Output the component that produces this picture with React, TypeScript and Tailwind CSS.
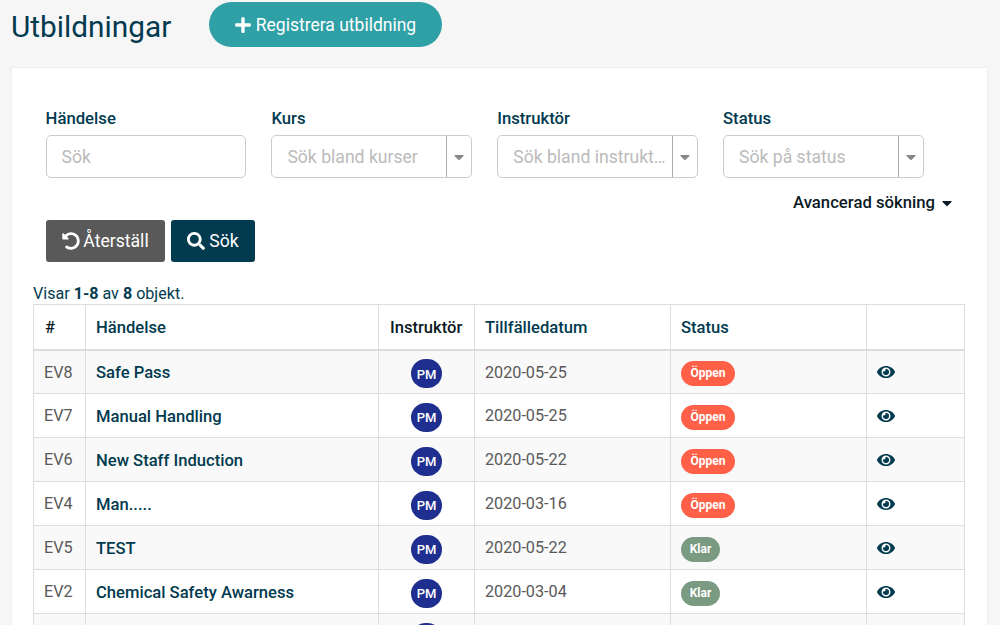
import { FaCaretDown, FaEye, FaPlus, FaSearch, FaUndoAlt } from 'react-icons/fa';

const ROWS = [
  { id: 'EV8', name: 'Safe Pass', date: '2020-05-25', status: 'Öppen' },
  { id: 'EV7', name: 'Manual Handling', date: '2020-05-25', status: 'Öppen' },
  { id: 'EV6', name: 'New Staff Induction', date: '2020-05-22', status: 'Öppen' },
  { id: 'EV4', name: 'Man.....', date: '2020-03-16', status: 'Öppen' },
  { id: 'EV5', name: 'TEST', date: '2020-05-22', status: 'Klar' },
  { id: 'EV2', name: 'Chemical Safety Awarness', date: '2020-03-04', status: 'Klar' },
  { id: 'EV1', name: '', date: '', status: '' },
];

function SelectBox({ placeholder }: { placeholder: string }) {
  return (
    <div className="flex h-[43px] rounded-[5px] border border-[#ccc] bg-white">
      <div className="min-w-0 flex-1 truncate pl-[15px] pr-1 text-[17.6px] leading-[43px] text-[#bbb]">{placeholder}</div>
      <div className="flex w-[25px] items-center justify-center border-l border-[#aaa] text-[#888]">
        <FaCaretDown className="h-[16px] w-[10px]" />
      </div>
    </div>
  );
}

function Filter({ label, children }: { label: string; children: React.ReactNode }) {
  return (
    <div>
      <div className="mb-[4px] h-[24px] text-[16.7px] font-medium leading-[24px] text-[#023a4f]">{label}</div>
      {children}
    </div>
  );
}

export default function App() {
  return (
    <div className="h-[625px] overflow-hidden bg-[#f6f6f6] font-['Roboto',sans-serif] text-[#023a4f]">
      {/* Header */}
      <div className="flex items-start pl-[11px] pt-[2px]">
        <h1 className="mt-[7px] w-[198px] text-[29.8px] font-normal leading-[36px]">Utbildningar</h1>
        <button className="flex h-[45px] w-[233px] items-center justify-center gap-[5px] rounded-full bg-[#2fa0a6] text-[17.5px] text-white">
          <FaPlus className="h-[18px] w-[16px]" />
          <span className="mt-[2px]">Registrera utbildning</span>
        </button>
      </div>

      {/* Panel */}
      <div className="ml-[11px] mt-[20px] w-[977px] border border-[#eee] bg-white pl-[21px] pt-[39px]">
        <div className="ml-[12.6px] grid w-[878px] grid-cols-4 gap-x-[25.2px]">
          <Filter label="Händelse">
            <div className="h-[43px] rounded-[5px] border border-[#ccc] pl-[15px] text-[17.6px] leading-[43px] text-[#bbb]">Sök</div>
          </Filter>
          <Filter label="Kurs">
            <SelectBox placeholder="Sök bland kurser" />
          </Filter>
          <Filter label="Instruktör">
            <SelectBox placeholder="Sök bland instruktörer" />
          </Filter>
          <Filter label="Status">
            <SelectBox placeholder="Sök på status" />
          </Filter>
        </div>

        <div className="mr-[35px] mt-[13px] flex h-[24px] items-center justify-end gap-[7px] text-[16.7px] font-medium text-[#0b1a24]">
          Avancerad sökning
          <FaCaretDown className="h-[16px] w-[10px]" />
        </div>

        <div className="ml-[13px] mt-[5px] flex gap-[6px] text-[17.6px] text-white">
          <button className="flex h-[42px] w-[119px] items-center justify-center gap-[3px] rounded-[3px] bg-[#595959]">
            <FaUndoAlt className="h-[18px] w-[18px]" />
            Återställ
          </button>
          <button className="flex h-[42px] w-[84px] items-center justify-center gap-[4px] rounded-[3px] bg-[#023a4f]">
            <FaSearch className="h-[18px] w-[18px]" />
            Sök
          </button>
        </div>

        <div className="mt-[22px] h-[20px] text-[16.1px] leading-[20px]">
          Visar <b className="font-bold">1-8</b> av <b className="font-bold">8</b> objekt.
        </div>

        {/* Table */}
        <table className="w-[931px] table-fixed border-collapse border border-[#ddd] text-[16.2px]">
          <colgroup>
            <col className="w-[52px]" />
            <col className="w-[293px]" />
            <col className="w-[96px]" />
            <col className="w-[196px]" />
            <col className="w-[196px]" />
            <col className="w-[98px]" />
          </colgroup>
          <thead>
            <tr className="h-[45px] border-b-2 border-[#ddd] text-left text-[16.6px]">
              <th className="border-r border-[#ddd] px-[11px] pt-[4px] font-medium text-[#0b1a24]">#</th>
              <th className="border-r border-[#ddd] px-[10px] pt-[4px] font-medium">Händelse</th>
              <th className="border-r border-[#ddd] pl-[11px] pt-[4px] font-medium text-[#0b1a24]">Instruktör</th>
              <th className="border-r border-[#ddd] px-[10px] pt-[4px] font-medium">Tillfälledatum</th>
              <th className="border-r border-[#ddd] px-[10px] pt-[4px] font-medium">Status</th>
              <th></th>
            </tr>
          </thead>
          <tbody>
            {ROWS.map((row, i) => (
              <tr key={row.id} className={`h-[44px] border-b border-[#ddd] ${i % 2 === 0 ? 'bg-[#f9f9f9]' : 'bg-white'}`}>
                <td className="border-r border-[#ddd] px-[10px] pt-[2px] text-[#595959]">{row.id}</td>
                <td className="border-r border-[#ddd] px-[10px] pt-[4px] text-[16.6px] font-medium">{row.name}</td>
                <td className="border-r border-[#ddd]">
                  <div className="mx-auto mt-[3px] flex h-[29px] w-[31px] items-center justify-center rounded-full bg-[#1f2f8f] pt-[2px] text-[13px] font-medium text-white">
                    PM
                  </div>
                </td>
                <td className="border-r border-[#ddd] px-[10px] pt-[2px] text-[#595959]">{row.date}</td>
                <td className="border-r border-[#ddd] px-[10px]">
                  {row.status && (
                    <span
                      className={`mt-[3px] inline-flex h-[25px] items-center justify-center rounded-full text-[12px] font-bold text-white ${
                        row.status === 'Öppen' ? 'w-[54px] bg-[#ff6047]' : 'w-[39px] bg-[#7a9a82]'
                      }`}
                    >
                      {row.status}
                    </span>
                  )}
                </td>
                <td className="px-[10px]">{row.status && <FaEye className="h-[16px] w-[18px]" />}</td>
              </tr>
            ))}
          </tbody>
        </table>
      </div>
    </div>
  );
}
